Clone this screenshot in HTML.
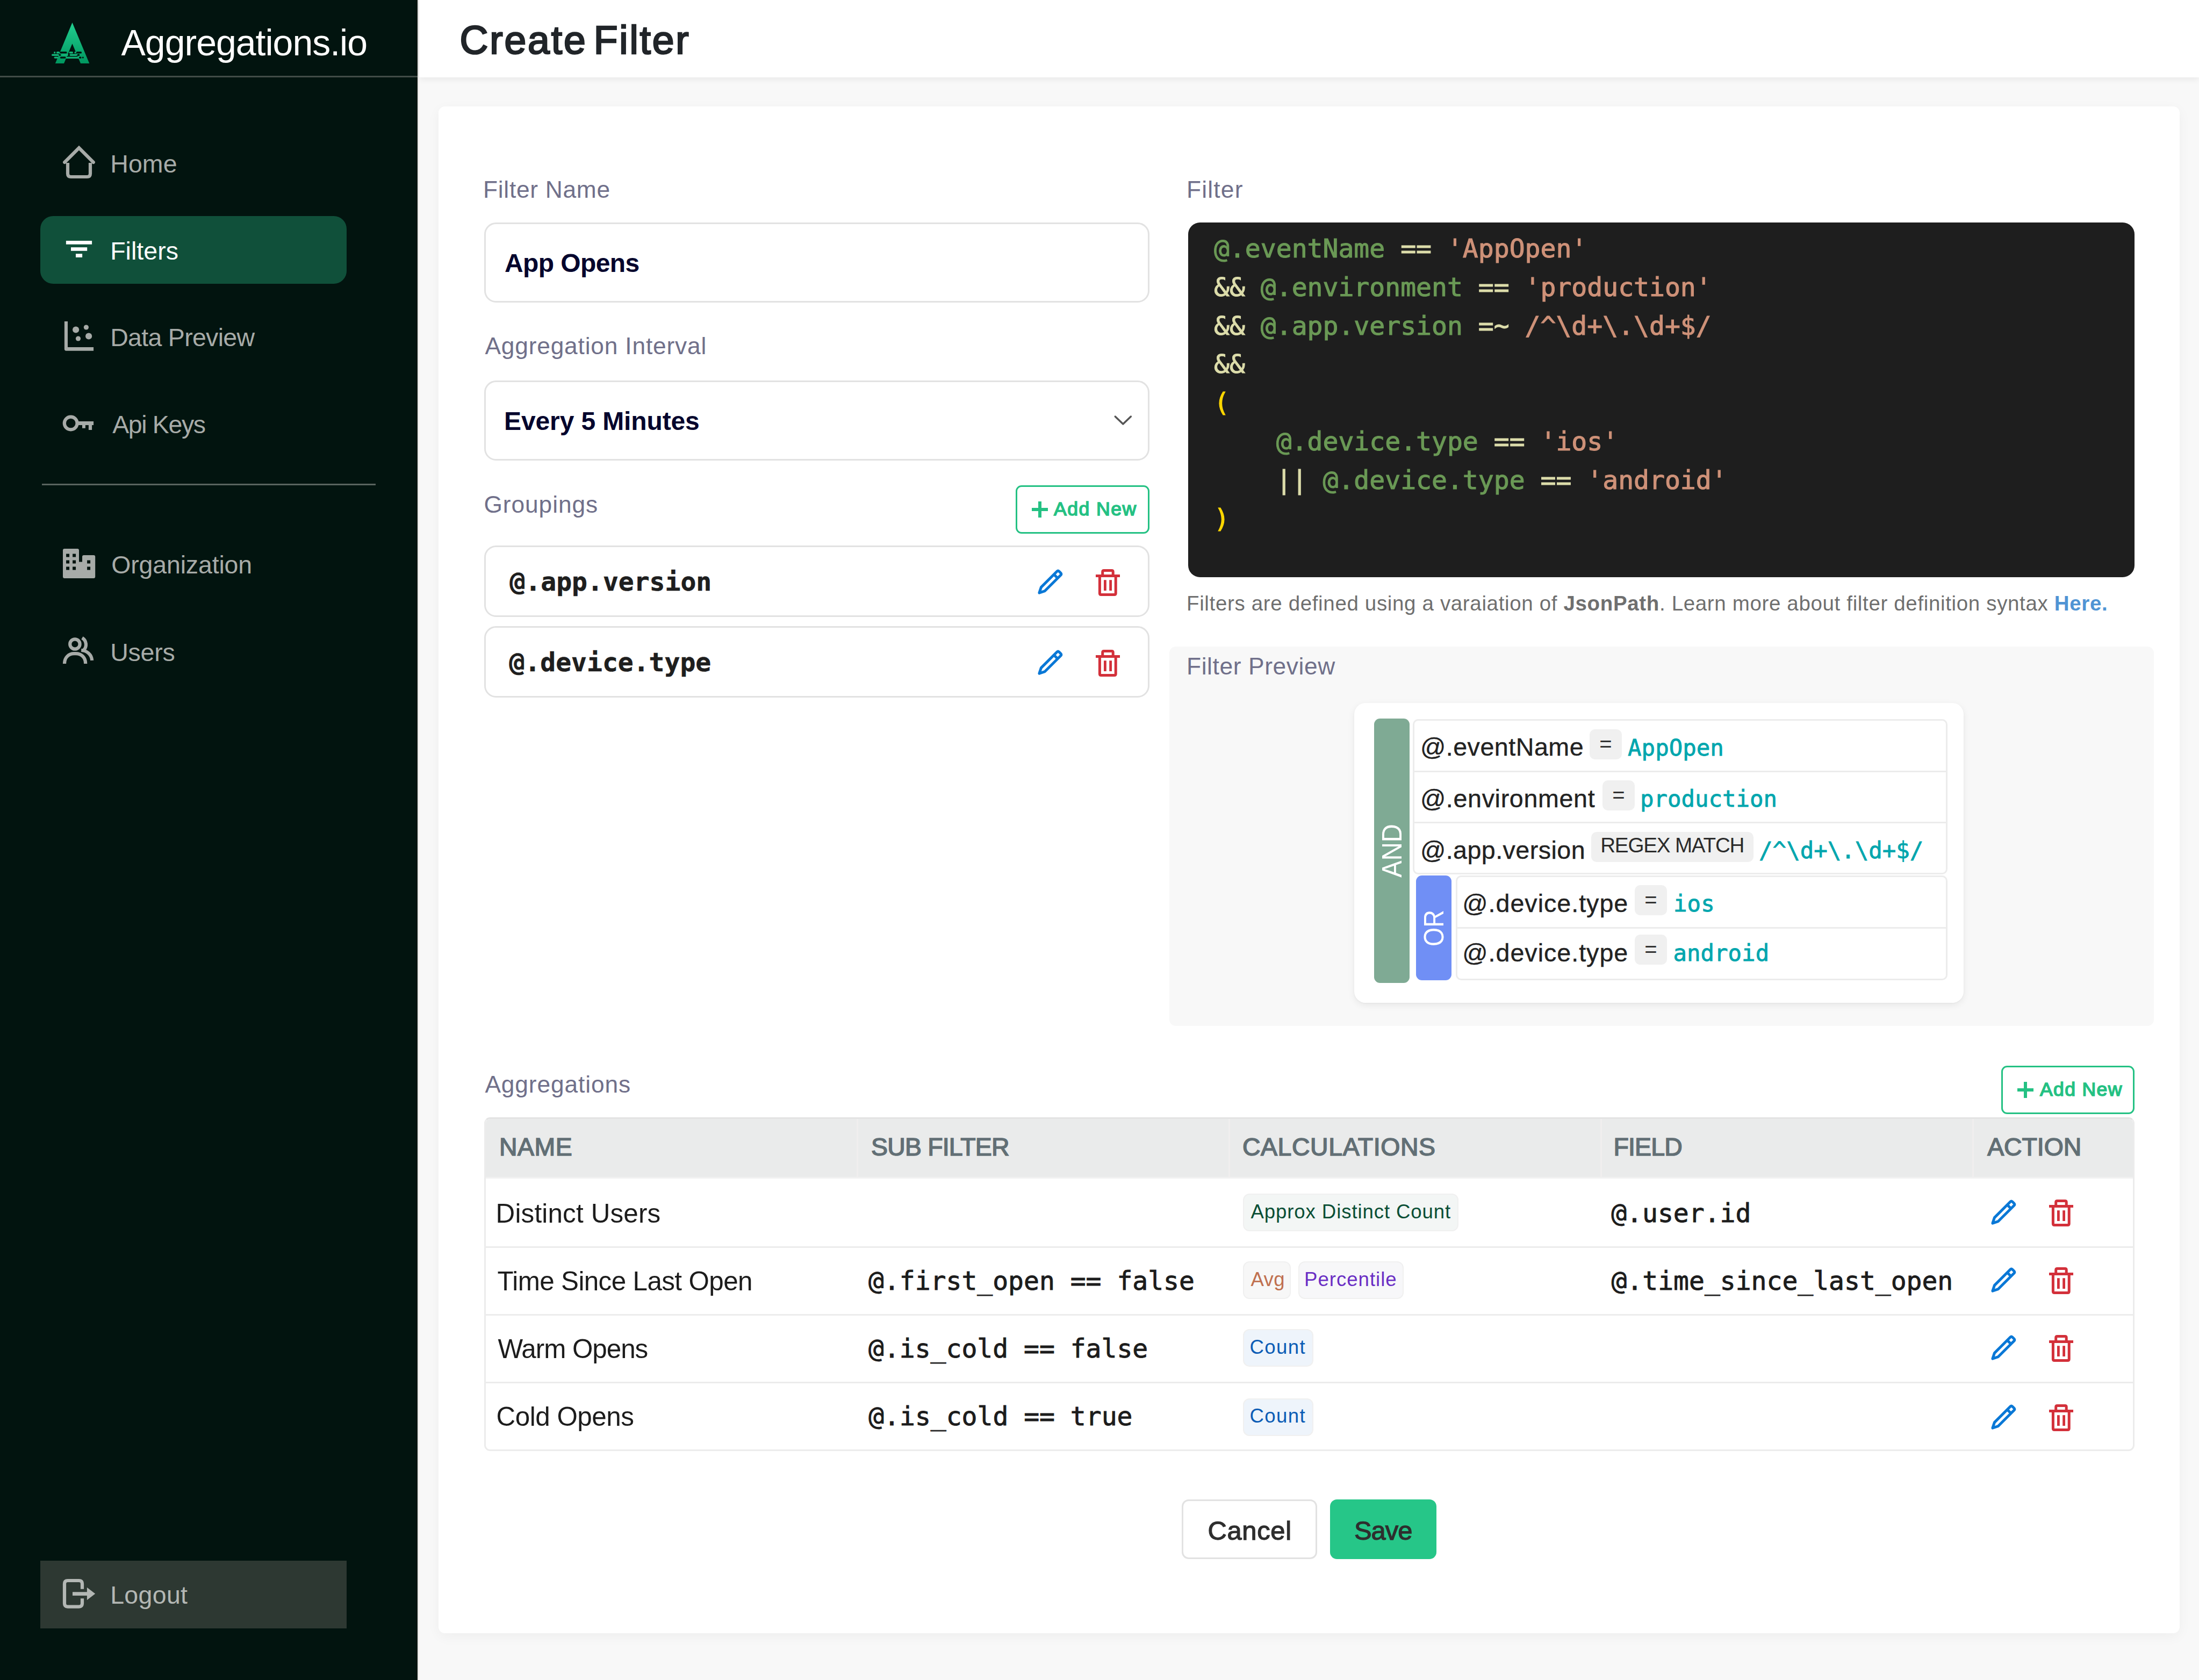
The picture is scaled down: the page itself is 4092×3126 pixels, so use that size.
<!DOCTYPE html>
<html lang="en">
<head>
<meta charset="utf-8">
<title>Create Filter - Aggregations.io</title>
<style>
html,body{margin:0;padding:0}
body{width:4092px;height:3126px;position:relative;overflow:hidden;background:#f8f8f8;font-family:"Liberation Sans",sans-serif;}
.t{position:absolute;white-space:pre;line-height:1;margin:0;font-weight:400}
.ic{position:absolute;display:block;overflow:visible}
aside{position:absolute;left:0;top:0;width:777px;height:3126px;background:#02140f;border-right:3px solid #eceae8}
header{position:absolute;left:780px;top:0;width:3312px;height:144px;background:#fff;box-shadow:0 3px 12px rgba(0,0,0,.07)}
main{position:absolute;left:816px;top:198px;width:3240px;height:2841px;background:#fff;border-radius:12px;box-shadow:0 6px 24px rgba(0,0,0,.045)}
.field{box-sizing:border-box;border:3px solid #e2e2e2;border-radius:22px;background:#fff}
.badge{position:absolute;box-sizing:border-box;height:70px;border-radius:12px;border:2px solid #f0f0f0}
.op{position:absolute;box-sizing:border-box;height:56px;border-radius:10px;background:#f0f0f0}
.rows{box-sizing:border-box;border:3px solid #ececec;border-radius:10px;background:#fff}
.sep{position:absolute;left:0;right:0;height:3px;background:#ececec}
.rot{position:absolute;left:calc(50% + 1px);top:50%;transform:translate(-50%,-50%) rotate(-90deg);color:#fff;line-height:1;white-space:pre}
pre i{font-style:normal}
pre .g{color:#6a9955}pre .o{color:#dcdcaa}pre .s{color:#ce9178}pre .p{color:#ffd700}
</style>
</head>
<body>

<aside>
<svg class="ic" style="left:90px;top:36px" width="90" height="90" viewBox="90 36 90 90">
<defs><linearGradient id="lg" x1="0" y1="0" x2="0" y2="1"><stop offset="0" stop-color="#22cf90"/><stop offset="1" stop-color="#00975f"/></linearGradient></defs>
<path d="M134.5,41.9 L166.3,118.1 L150,118.1 L134.5,81.2 L119,118.1 L102.9,118.1 Z" fill="url(#lg)"/>
<path d="M121,105.6 H148 V109 H119.6 Z" fill="#0fae72"/>
<g fill="#02140f"><rect x="111.5" y="96" width="13" height="3.4" rx="1.5"/><rect x="142" y="96" width="10" height="3.4" rx="1.5"/>
<rect x="110" y="100.6" width="3" height="3.4" rx="1"/><rect x="144" y="100.6" width="4" height="3.4" rx="1"/>
<rect x="112" y="105.4" width="10.5" height="3.4" rx="1.5"/><rect x="147" y="105.4" width="4.5" height="3.4" rx="1.5"/></g>
<g fill="#12b377"><rect x="100" y="96" width="3.4" height="3.4" rx="1.7"/><rect x="105" y="96" width="6" height="3.4" rx="1.5"/>
<rect x="128.5" y="96" width="7.5" height="3.4" rx="1.5"/><rect x="138.5" y="96" width="3" height="3.4" rx="1.5"/>
<rect x="96" y="100.6" width="13.5" height="3.4" rx="1.7"/><rect x="115" y="100.6" width="12" height="3.4" rx="1.7"/><rect x="129.5" y="100.6" width="14" height="3.4" rx="1.7"/>
<rect x="100.5" y="105.4" width="8" height="3.4" rx="1.7"/></g>
<rect x="152.8" y="105.6" width="3" height="3" rx="1.5" fill="#02140f"/>
</svg>
<div class="t" style='left:225.5px;top:45.4px;font-size:68.00px;color:#ffffff;letter-spacing:-1.00px;'>Aggregations.io</div>
<div style="position:absolute;left:0.0px;top:141.0px;width:777.0px;height:3.0px;background:#414c47"></div>
<svg class="ic" style="left:110px;top:264px" width="74" height="74" viewBox="110 264 74 74" fill="none" stroke="#a7aba8" stroke-width="6.2">
<path d="M126,303 V323 Q126,329 132,329 H162 Q168,329 168,323 V303"/>
<path d="M120.2,302 L147,275.2 L173.8,302" stroke-linecap="round" stroke-linejoin="miter"/></svg>
<div class="t" style='left:205.2px;top:281.6px;font-size:46.50px;color:#a7aba8;letter-spacing:0.12px;'>Home</div>
<div style="position:absolute;left:75.0px;top:402.0px;width:570.0px;height:125.5px;background:#10503a;border-radius:24px"></div>
<svg class="ic" style="left:122px;top:447px" width="50" height="33" viewBox="0 0 50 33" fill="#fff">
<rect x="0.9" y="1" width="48.2" height="6.7"/><rect x="10" y="13.2" width="30.2" height="6.6"/><rect x="19" y="25.2" width="12.1" height="6.7"/></svg>
<div class="t" style='left:205.2px;top:443.6px;font-size:46.50px;color:#ffffff;letter-spacing:0.02px;'>Filters</div>
<svg class="ic" style="left:116px;top:594px" width="62" height="62" viewBox="116 594 62 62" fill="#a7aba8">
<path d="M119.9,597.9 H126 V646 H174.1 V652.7 H123 Q119.9,652.7 119.9,649.6 Z"/>
<circle cx="141.1" cy="613.5" r="6.1"/><circle cx="160.4" cy="609" r="4.6"/><circle cx="165.1" cy="625.5" r="6.1"/><circle cx="145.5" cy="630" r="4.6"/></svg>
<div class="t" style='left:205.2px;top:605.4px;font-size:46.50px;color:#a7aba8;letter-spacing:-0.70px;'>Data Preview</div>
<svg class="ic" style="left:114px;top:768px" width="64" height="40" viewBox="114 768 64 40">
<circle cx="131.7" cy="787.5" r="11.9" fill="none" stroke="#a7aba8" stroke-width="6.2"/>
<path d="M145.5,784 H174.1 V790.9 H171.1 V800 H164.9 V790.9 H158.9 V796.8 H153 V790.9 H145.5 Z" fill="#a7aba8"/></svg>
<div class="t" style='left:209.2px;top:767.2px;font-size:46.50px;color:#a7aba8;letter-spacing:-1.38px;'>Api Keys</div>
<div style="position:absolute;left:78.0px;top:899.5px;width:621.0px;height:3.0px;background:#59635e"></div>
<svg class="ic" style="left:114px;top:1018px" width="66" height="62" viewBox="114 1018 66 62">
<path fill-rule="evenodd" fill="#a7aba8" d="M120,1021 H144 Q147,1021 147,1024 V1045.5 H153 V1035.9 Q153,1032.9 156,1032.9 H174.2 Q177.2,1032.9 177.2,1035.9 V1072.9 Q177.2,1075.9 174.2,1075.9 H120 Q117,1075.9 117,1072.9 V1024 Q117,1021 120,1021 Z
M123.1,1030.5 h6 v6 h-6 Z M135.1,1030.5 h6 v6 h-6 Z M123.1,1042.4 h6 v6 h-6 Z M135.1,1042.4 h6 v6 h-6 Z M123.1,1054.4 h6 v6.2 h-6 Z M135.1,1054.4 h6 v6.2 h-6 Z M162.1,1042.4 h6 v6 h-6 Z M162.1,1054.4 h6 v6.2 h-6 Z"/></svg>
<div class="t" style='left:207.2px;top:1028.1px;font-size:46.50px;color:#a7aba8;letter-spacing:-0.15px;'>Organization</div>
<svg class="ic" style="left:114px;top:1180px" width="64" height="60" viewBox="114 1180 64 60" fill="none" stroke="#a7aba8" stroke-width="6.2">
<circle cx="139.4" cy="1198.5" r="9.2"/>
<path d="M120,1235 C120,1223 128,1216.2 138,1216.2 H141 C151,1216.2 159.2,1223 159.2,1235"/>
<path d="M152.9,1186.8 A14.5,14.5 0 0 1 155.2,1210"/>
<path d="M151.2,1210 C161.5,1210.4 170.6,1217.8 171.2,1228.9"/></svg>
<div class="t" style='left:205.2px;top:1190.6px;font-size:46.50px;color:#a7aba8;letter-spacing:-0.20px;'>Users</div>
<div style="position:absolute;left:75.0px;top:2904.0px;width:570.0px;height:126.0px;background:#2d3832"></div>
<svg class="ic" style="left:114px;top:2934px" width="66" height="62" viewBox="114 2934 66 62">
<path d="M153,2956.7 V2947 Q153,2941 147,2941 H126 Q120,2941 120,2947 V2983.6 Q120,2989.6 126,2989.6 H147 Q153,2989.6 153,2983.6 V2974.2" fill="none" stroke="#b3b7b4" stroke-width="6.2"/>
<path d="M135,2962.3 H161.9 V2953.7 L177.2,2965.5 L161.9,2977.3 V2968.9 H135 Z" fill="#b3b7b4"/></svg>
<div class="t" style='left:205.2px;top:2945.4px;font-size:46.50px;color:#b3b7b4;letter-spacing:0.32px;'>Logout</div>
</aside>
<header>
<h1 class="t" style='left:75.5px;top:38.7px;font-size:73.30px;color:#212529;letter-spacing:2.83px;-webkit-text-stroke:2.6px #212529;word-spacing:-11px;'>Create Filter</h1>
</header>
<main>
<label class="t" style='left:83.0px;top:132.5px;font-size:44.30px;color:#70708a;letter-spacing:0.72px;'>Filter Name</label>
<div class="field" style="position:absolute;left:84.5px;top:216.0px;width:1238.0px;height:149.0px;"></div>
<div class="t" style='left:123.0px;top:268.1px;font-size:48.00px;color:#05052d;font-weight:700;letter-spacing:-0.59px;'>App Opens</div>
<label class="t" style='left:86.4px;top:423.8px;font-size:44.30px;color:#70708a;letter-spacing:0.81px;'>Aggregation Interval</label>
<div class="field" style="position:absolute;left:84.5px;top:510.0px;width:1238.0px;height:149.0px;"></div>
<div class="t" style='left:122.1px;top:561.8px;font-size:48.00px;color:#05052d;font-weight:700;letter-spacing:-0.13px;'>Every 5 Minutes</div>
<svg class="ic" style="left:1254px;top:572px" width="40" height="26" viewBox="0 0 40 26"><path d="M5.2,5 L19.8,19 L34.4,5" fill="none" stroke="#555" stroke-width="3.4" stroke-linecap="round" stroke-linejoin="round"/></svg>
<label class="t" style='left:84.4px;top:718.5px;font-size:44.30px;color:#70708a;letter-spacing:0.93px;'>Groupings</label>
<div style="position:absolute;left:1074.0px;top:705.0px;width:249.0px;height:90.0px;box-sizing:border-box;border:3px solid #24c183;border-radius:11px"></div>
<svg class="ic" style="left:1104.0px;top:735.0px" width="30" height="30" viewBox="0 0 30 30"><path d="M12,0h6v12h12v6h-12v12h-6v-12h-12v-6h12z" fill="#24c183"/></svg>
<div class="t" style='left:1145.0px;top:731.6px;font-size:35.60px;color:#24c183;letter-spacing:1.47px;-webkit-text-stroke:1.6px #24c183;'>Add New</div>
<div class="field" style="position:absolute;left:84.5px;top:817.0px;width:1238.0px;height:133.0px;"></div>
<div class="t" style='left:132.5px;top:859.7px;font-size:48.00px;color:#1e1e1e;font-weight:700;font-family:"DejaVu Sans Mono", "Liberation Mono", monospace;-webkit-text-stroke:.6px #1e1e1e;'>@.app.version</div>
<svg class="ic" style="left:1113.5px;top:859.2px" width="52" height="52" viewBox="0 0 52 52"><g transform="translate(2,48) rotate(-45)" fill="none" stroke="#0a78d6" stroke-width="5" stroke-linejoin="round"><path d="M2.7,0 L12.6,-4.9 L54.4,-4.9 Q57,-4.9 57,-2.3 L57,2.3 Q57,4.9 54.4,4.9 L12.6,4.9 Z"/><path d="M46.2,-4.9 L46.2,4.9"/></g></svg>
<svg class="ic" style="left:1223.0px;top:860.8px" width="45" height="50" viewBox="0 0 45 50"><g fill="none" stroke="#d3303a" stroke-width="5"><path d="M12.7,12 V5 Q12.7,2.5 15.2,2.5 H29.7 Q32.2,2.5 32.2,5 V12"/><path d="M7.4,13 V45 Q7.4,47.5 9.9,47.5 H34.7 Q37.2,47.5 37.2,45 V13"/></g><g fill="#d3303a"><rect x="0" y="10" width="45" height="5"/><rect x="15" y="20.2" width="4.8" height="19.8"/><rect x="25.2" y="20.2" width="4.8" height="19.8"/></g></svg>
<div class="field" style="position:absolute;left:84.5px;top:967.0px;width:1238.0px;height:133.0px;"></div>
<div class="t" style='left:131.5px;top:1009.7px;font-size:48.00px;color:#1e1e1e;font-weight:700;font-family:"DejaVu Sans Mono", "Liberation Mono", monospace;-webkit-text-stroke:.6px #1e1e1e;'>@.device.type</div>
<svg class="ic" style="left:1113.5px;top:1009.2px" width="52" height="52" viewBox="0 0 52 52"><g transform="translate(2,48) rotate(-45)" fill="none" stroke="#0a78d6" stroke-width="5" stroke-linejoin="round"><path d="M2.7,0 L12.6,-4.9 L54.4,-4.9 Q57,-4.9 57,-2.3 L57,2.3 Q57,4.9 54.4,4.9 L12.6,4.9 Z"/><path d="M46.2,-4.9 L46.2,4.9"/></g></svg>
<svg class="ic" style="left:1223.0px;top:1010.8px" width="45" height="50" viewBox="0 0 45 50"><g fill="none" stroke="#d3303a" stroke-width="5"><path d="M12.7,12 V5 Q12.7,2.5 15.2,2.5 H29.7 Q32.2,2.5 32.2,5 V12"/><path d="M7.4,13 V45 Q7.4,47.5 9.9,47.5 H34.7 Q37.2,47.5 37.2,45 V13"/></g><g fill="#d3303a"><rect x="0" y="10" width="45" height="5"/><rect x="15" y="20.2" width="4.8" height="19.8"/><rect x="25.2" y="20.2" width="4.8" height="19.8"/></g></svg>
<label class="t" style='left:1392.0px;top:132.5px;font-size:44.30px;color:#70708a;letter-spacing:1.20px;'>Filter</label>
<pre style='position:absolute;left:1395px;top:216px;width:1761px;height:659.5px;margin:0;box-sizing:border-box;background:#1e1e1e;border-radius:22px;padding:13.1px 0 0 48px;font-family:"DejaVu Sans Mono", "Liberation Mono", monospace;font-size:48.05px;line-height:71.8px;color:#dcdcaa;overflow:hidden;-webkit-text-stroke-width:1.1px'><i class="g">@.eventName</i> <i class="o">==</i> <i class="s">'AppOpen'</i>
<i class="o">&amp;&amp;</i> <i class="g">@.environment</i> <i class="o">==</i> <i class="s">'production'</i>
<i class="o">&amp;&amp;</i> <i class="g">@.app.version</i> <i class="o">=~</i> <i class="s">/^\d+\.\d+$/</i>
<i class="o">&amp;&amp;</i>
<i class="p">(</i>
    <i class="g">@.device.type</i> <i class="o">==</i> <i class="s">'ios'</i>
    <i class="o">||</i> <i class="g">@.device.type</i> <i class="o">==</i> <i class="s">'android'</i>
<i class="p">)</i></pre>
<p class="t" style='left:1392.0px;top:905.9px;font-size:38.50px;color:#6f6f6f;letter-spacing:0.65px;'>Filters are defined using a varaiation of <b>JsonPath</b>. Learn more about filter definition syntax <b style="color:#4f94d4">Here.</b></p>
<div style="position:absolute;left:1360.0px;top:1005.0px;width:1831.5px;height:706.0px;background:#f8f8f8;border-radius:12px"></div>
<label class="t" style='left:1392.0px;top:1019.5px;font-size:44.30px;color:#70708a;letter-spacing:0.61px;'>Filter Preview</label>
<div style="position:absolute;left:1704.0px;top:1110.0px;width:1134.0px;height:557.8px;background:#fff;border-radius:21px;box-shadow:0 4px 14px rgba(0,0,0,.07),0 1px 3px rgba(0,0,0,.04)"></div>
<div style="position:absolute;left:1741.0px;top:1139.0px;width:66.0px;height:492.0px;background:#7faa94;border-radius:11px"><span class="rot" style="font-size:51.5px;transform:translate(-50%,-50%) rotate(-90deg) scaleX(.915)">AND</span></div>
<div style="position:absolute;left:1819.3px;top:1431.3px;width:65.5px;height:194.5px;background:#708ff5;border-radius:11px"><span class="rot" style="font-size:51.5px;transform:translate(-50%,-50%) rotate(-90deg) scaleX(.88)">OR</span></div>
<div class="rows" style="position:absolute;left:1812.6px;top:1140.4px;width:995.4px;height:288.8px;"><span class="sep" style="top:92.2px"></span><span class="sep" style="top:188.1px"></span></div>
<div class="t" style='left:1826.9px;top:1169.1px;font-size:46.60px;color:#222;letter-spacing:0.52px;-webkit-text-stroke:.4px #222;'>@.eventName</div><span class="op" style="left:2142.0px;top:1158.5px;width:59.5px"></span><div class="t" style='left:2160.2px;top:1165.6px;font-size:40.00px;color:#333;'>=</div><div class="t" style='left:2213.1px;top:1172.6px;font-size:42.40px;color:#00a6ae;font-family:"DejaVu Sans Mono", "Liberation Mono", monospace;-webkit-text-stroke:.8px #00a6ae;'>AppOpen</div>
<div class="t" style='left:1826.9px;top:1264.9px;font-size:46.60px;color:#222;letter-spacing:0.67px;-webkit-text-stroke:.4px #222;'>@.environment</div><span class="op" style="left:2166.0px;top:1254.3px;width:59.5px"></span><div class="t" style='left:2184.2px;top:1261.4px;font-size:40.00px;color:#333;'>=</div><div class="t" style='left:2235.9px;top:1268.4px;font-size:42.40px;color:#00a6ae;font-family:"DejaVu Sans Mono", "Liberation Mono", monospace;-webkit-text-stroke:.8px #00a6ae;'>production</div>
<div class="t" style='left:1826.9px;top:1360.6px;font-size:46.60px;color:#222;letter-spacing:0.46px;-webkit-text-stroke:.4px #222;'>@.app.version</div><span class="op" style="left:2145.0px;top:1350.0px;width:302.4px"></span><div class="t" style='left:2162.2px;top:1356.1px;font-size:38.60px;color:#2b2b2b;letter-spacing:-1.18px;'>REGEX MATCH</div><div class="t" style='left:2457.1px;top:1364.1px;font-size:42.40px;color:#00a6ae;font-family:"DejaVu Sans Mono", "Liberation Mono", monospace;-webkit-text-stroke:.8px #00a6ae;'>/^\d+\.\d+$/</div>
<div class="rows" style="position:absolute;left:1893.4px;top:1431.4px;width:914.6px;height:194.4px;"><span class="sep" style="top:92.6px"></span></div>
<div class="t" style='left:1905.3px;top:1459.6px;font-size:46.60px;color:#222;letter-spacing:1.00px;-webkit-text-stroke:.4px #222;'>@.device.type</div><span class="op" style="left:2226.0px;top:1449.0px;width:59.5px"></span><div class="t" style='left:2244.2px;top:1456.1px;font-size:40.00px;color:#333;'>=</div><div class="t" style='left:2298.1px;top:1463.1px;font-size:42.40px;color:#00a6ae;font-family:"DejaVu Sans Mono", "Liberation Mono", monospace;-webkit-text-stroke:.8px #00a6ae;'>ios</div>
<div class="t" style='left:1905.3px;top:1551.9px;font-size:46.60px;color:#222;letter-spacing:1.00px;-webkit-text-stroke:.4px #222;'>@.device.type</div><span class="op" style="left:2226.0px;top:1541.3px;width:59.5px"></span><div class="t" style='left:2244.2px;top:1548.4px;font-size:40.00px;color:#333;'>=</div><div class="t" style='left:2297.5px;top:1555.4px;font-size:42.40px;color:#00a6ae;font-family:"DejaVu Sans Mono", "Liberation Mono", monospace;-webkit-text-stroke:.8px #00a6ae;'>android</div>
<label class="t" style='left:86.4px;top:1798.2px;font-size:44.30px;color:#70708a;letter-spacing:0.88px;'>Aggregations</label>
<div style="position:absolute;left:2908.0px;top:1785.0px;width:248.0px;height:90.0px;box-sizing:border-box;border:3px solid #24c183;border-radius:11px"></div>
<svg class="ic" style="left:2938.0px;top:1815.0px" width="30" height="30" viewBox="0 0 30 30"><path d="M12,0h6v12h12v6h-12v12h-6v-12h-12v-6h12z" fill="#24c183"/></svg>
<div class="t" style='left:2980.0px;top:1811.6px;font-size:35.60px;color:#24c183;letter-spacing:1.33px;-webkit-text-stroke:1.6px #24c183;'>Add New</div>
<div style="position:absolute;left:84.5px;top:1881.0px;width:3071.5px;height:620.5px;box-sizing:border-box;border:3px solid #ececec;border-top-color:#e3e3e3;border-radius:11px;background:#fff;overflow:hidden"><span style="position:absolute;left:0;top:0;right:0;height:108px;background:#eaebeb;border-bottom:3px solid #f1f1f1"></span><span style="position:absolute;left:690.0px;top:0;width:3px;height:108px;background:#f0eeee"></span><span style="position:absolute;left:1382.2px;top:0;width:3px;height:108px;background:#f0eeee"></span><span style="position:absolute;left:2074.4px;top:0;width:3px;height:108px;background:#f0eeee"></span><span style="position:absolute;left:2766.5px;top:0;width:3px;height:108px;background:#f0eeee"></span><span class="sep" style="top:236.5px"></span><span class="sep" style="top:362.5px"></span><span class="sep" style="top:488.5px"></span></div>
<div class="t" style='left:112.9px;top:1913.4px;font-size:46.40px;color:#626f75;letter-spacing:0.60px;-webkit-text-stroke:1.6px #626f75;'>NAME</div>
<div class="t" style='left:805.1px;top:1913.4px;font-size:46.40px;color:#626f75;letter-spacing:-0.81px;-webkit-text-stroke:1.6px #626f75;'>SUB FILTER</div>
<div class="t" style='left:1495.9px;top:1913.4px;font-size:46.40px;color:#626f75;letter-spacing:0.62px;-webkit-text-stroke:1.6px #626f75;'>CALCULATIONS</div>
<div class="t" style='left:2186.4px;top:1913.4px;font-size:46.40px;color:#626f75;letter-spacing:-0.80px;-webkit-text-stroke:1.6px #626f75;'>FIELD</div>
<div class="t" style='left:2882.2px;top:1913.4px;font-size:46.40px;color:#626f75;letter-spacing:-0.04px;-webkit-text-stroke:1.6px #626f75;'>ACTION</div>
<div class="t" style='left:106.6px;top:2034.7px;font-size:49.40px;color:#1c1c1c;letter-spacing:0.16px;'>Distinct Users</div>
<span class="badge" style="left:1497.3px;top:2022.8px;width:400.7px;background:#f3f6f5"></span>
<div class="t" style='left:1511.5px;top:2038.7px;font-size:36.60px;color:#0a4f35;letter-spacing:0.90px;'>Approx Distinct Count</div>
<div class="t" style='left:2182.2px;top:2035.2px;font-size:48.00px;color:#1c1c1c;font-family:"DejaVu Sans Mono", "Liberation Mono", monospace;-webkit-text-stroke:.9px #1c1c1c;'>@.user.id</div>
<svg class="ic" style="left:2887.5px;top:2032.3px" width="52" height="52" viewBox="0 0 52 52"><g transform="translate(2,48) rotate(-45)" fill="none" stroke="#0a78d6" stroke-width="5" stroke-linejoin="round"><path d="M2.7,0 L12.6,-4.9 L54.4,-4.9 Q57,-4.9 57,-2.3 L57,2.3 Q57,4.9 54.4,4.9 L12.6,4.9 Z"/><path d="M46.2,-4.9 L46.2,4.9"/></g></svg>
<svg class="ic" style="left:2997.0px;top:2033.8px" width="45" height="50" viewBox="0 0 45 50"><g fill="none" stroke="#d3303a" stroke-width="5"><path d="M12.7,12 V5 Q12.7,2.5 15.2,2.5 H29.7 Q32.2,2.5 32.2,5 V12"/><path d="M7.4,13 V45 Q7.4,47.5 9.9,47.5 H34.7 Q37.2,47.5 37.2,45 V13"/></g><g fill="#d3303a"><rect x="0" y="10" width="45" height="5"/><rect x="15" y="20.2" width="4.8" height="19.8"/><rect x="25.2" y="20.2" width="4.8" height="19.8"/></g></svg>
<div class="t" style='left:109.6px;top:2160.7px;font-size:49.40px;color:#1c1c1c;letter-spacing:-0.63px;'>Time Since Last Open</div>
<div class="t" style='left:800.0px;top:2161.2px;font-size:48.00px;color:#1c1c1c;font-family:"DejaVu Sans Mono", "Liberation Mono", monospace;-webkit-text-stroke:.9px #1c1c1c;'>@.first_open == false</div>
<span class="badge" style="left:1497.3px;top:2148.8px;width:89.2px;background:#f7f7f7"></span>
<div class="t" style='left:1511.5px;top:2164.7px;font-size:36.60px;color:#c0704f;letter-spacing:0.30px;'>Avg</div>
<span class="badge" style="left:1599.8px;top:2148.8px;width:196.6px;background:#f7f7f9"></span>
<div class="t" style='left:1611.0px;top:2164.7px;font-size:36.60px;color:#6a2ec4;letter-spacing:1.00px;'>Percentile</div>
<div class="t" style='left:2182.5px;top:2161.2px;font-size:48.00px;color:#1c1c1c;font-family:"DejaVu Sans Mono", "Liberation Mono", monospace;-webkit-text-stroke:.9px #1c1c1c;'>@.time_since_last_open</div>
<svg class="ic" style="left:2887.5px;top:2158.3px" width="52" height="52" viewBox="0 0 52 52"><g transform="translate(2,48) rotate(-45)" fill="none" stroke="#0a78d6" stroke-width="5" stroke-linejoin="round"><path d="M2.7,0 L12.6,-4.9 L54.4,-4.9 Q57,-4.9 57,-2.3 L57,2.3 Q57,4.9 54.4,4.9 L12.6,4.9 Z"/><path d="M46.2,-4.9 L46.2,4.9"/></g></svg>
<svg class="ic" style="left:2997.0px;top:2159.8px" width="45" height="50" viewBox="0 0 45 50"><g fill="none" stroke="#d3303a" stroke-width="5"><path d="M12.7,12 V5 Q12.7,2.5 15.2,2.5 H29.7 Q32.2,2.5 32.2,5 V12"/><path d="M7.4,13 V45 Q7.4,47.5 9.9,47.5 H34.7 Q37.2,47.5 37.2,45 V13"/></g><g fill="#d3303a"><rect x="0" y="10" width="45" height="5"/><rect x="15" y="20.2" width="4.8" height="19.8"/><rect x="25.2" y="20.2" width="4.8" height="19.8"/></g></svg>
<div class="t" style='left:110.6px;top:2286.7px;font-size:49.40px;color:#1c1c1c;letter-spacing:-1.04px;'>Warm Opens</div>
<div class="t" style='left:800.0px;top:2287.2px;font-size:48.00px;color:#1c1c1c;font-family:"DejaVu Sans Mono", "Liberation Mono", monospace;-webkit-text-stroke:.9px #1c1c1c;'>@.is_cold == false</div>
<span class="badge" style="left:1497.3px;top:2274.8px;width:130.7px;background:#eef4fb"></span>
<div class="t" style='left:1509.5px;top:2290.7px;font-size:36.60px;color:#0b5cb5;letter-spacing:1.40px;'>Count</div>
<svg class="ic" style="left:2887.5px;top:2284.3px" width="52" height="52" viewBox="0 0 52 52"><g transform="translate(2,48) rotate(-45)" fill="none" stroke="#0a78d6" stroke-width="5" stroke-linejoin="round"><path d="M2.7,0 L12.6,-4.9 L54.4,-4.9 Q57,-4.9 57,-2.3 L57,2.3 Q57,4.9 54.4,4.9 L12.6,4.9 Z"/><path d="M46.2,-4.9 L46.2,4.9"/></g></svg>
<svg class="ic" style="left:2997.0px;top:2285.8px" width="45" height="50" viewBox="0 0 45 50"><g fill="none" stroke="#d3303a" stroke-width="5"><path d="M12.7,12 V5 Q12.7,2.5 15.2,2.5 H29.7 Q32.2,2.5 32.2,5 V12"/><path d="M7.4,13 V45 Q7.4,47.5 9.9,47.5 H34.7 Q37.2,47.5 37.2,45 V13"/></g><g fill="#d3303a"><rect x="0" y="10" width="45" height="5"/><rect x="15" y="20.2" width="4.8" height="19.8"/><rect x="25.2" y="20.2" width="4.8" height="19.8"/></g></svg>
<div class="t" style='left:107.6px;top:2412.7px;font-size:49.40px;color:#1c1c1c;letter-spacing:-0.50px;'>Cold Opens</div>
<div class="t" style='left:800.2px;top:2413.2px;font-size:48.00px;color:#1c1c1c;font-family:"DejaVu Sans Mono", "Liberation Mono", monospace;-webkit-text-stroke:.9px #1c1c1c;'>@.is_cold == true</div>
<span class="badge" style="left:1497.3px;top:2403.5px;width:130.7px;background:#eef4fb"></span>
<div class="t" style='left:1509.5px;top:2419.4px;font-size:36.60px;color:#0b5cb5;letter-spacing:1.40px;'>Count</div>
<svg class="ic" style="left:2887.5px;top:2413.0px" width="52" height="52" viewBox="0 0 52 52"><g transform="translate(2,48) rotate(-45)" fill="none" stroke="#0a78d6" stroke-width="5" stroke-linejoin="round"><path d="M2.7,0 L12.6,-4.9 L54.4,-4.9 Q57,-4.9 57,-2.3 L57,2.3 Q57,4.9 54.4,4.9 L12.6,4.9 Z"/><path d="M46.2,-4.9 L46.2,4.9"/></g></svg>
<svg class="ic" style="left:2997.0px;top:2414.5px" width="45" height="50" viewBox="0 0 45 50"><g fill="none" stroke="#d3303a" stroke-width="5"><path d="M12.7,12 V5 Q12.7,2.5 15.2,2.5 H29.7 Q32.2,2.5 32.2,5 V12"/><path d="M7.4,13 V45 Q7.4,47.5 9.9,47.5 H34.7 Q37.2,47.5 37.2,45 V13"/></g><g fill="#d3303a"><rect x="0" y="10" width="45" height="5"/><rect x="15" y="20.2" width="4.8" height="19.8"/><rect x="25.2" y="20.2" width="4.8" height="19.8"/></g></svg>
<div style="position:absolute;left:1383.0px;top:2592.0px;width:252.0px;height:110.5px;box-sizing:border-box;border:3px solid #e2e2e2;border-radius:13px;background:#fff"></div>
<div class="t" style='left:1431.5px;top:2625.7px;font-size:48.80px;color:#2e2e2e;letter-spacing:0.72px;-webkit-text-stroke:1.3px #2e2e2e;'>Cancel</div>
<div style="position:absolute;left:1659.0px;top:2592.0px;width:198.0px;height:110.5px;border-radius:13px;background:#26c688"></div>
<div class="t" style='left:1703.9px;top:2625.7px;font-size:48.80px;color:#2e2e2e;letter-spacing:-0.87px;-webkit-text-stroke:1.3px #2e2e2e;'>Save</div>
</main>
</body>
</html>
